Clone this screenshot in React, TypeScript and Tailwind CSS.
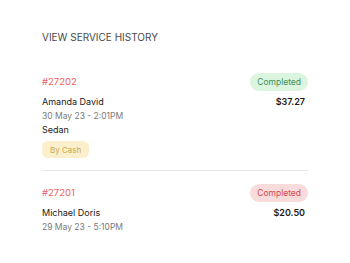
type Status = 'success' | 'failed'

interface Job {
  id: string
  customer: string
  date: string
  amount: string
  status: Status
  vehicle?: string
  payment?: string
}

const jobs: Job[] = [
  {
    id: '#27202',
    customer: 'Amanda David',
    date: '30 May 23 - 2:01PM',
    amount: '$37.27',
    status: 'success',
    vehicle: 'Sedan',
    payment: 'By Cash',
  },
  {
    id: '#27201',
    customer: 'Michael Doris',
    date: '29 May 23 - 5:10PM',
    amount: '$20.50',
    status: 'failed',
  },
]

export default function App() {
  return (
    <div className="min-h-[263px] w-full bg-white px-[42px] pt-[31px] font-['Inter',sans-serif] text-[#1a1a1a]">
      <h1 className="text-[10px] leading-[12px] uppercase text-[#4a4a4a]">
        View service history
      </h1>

      <div className="mt-[30px] flex flex-col">
        {jobs.map((job, i) => (
          <JobRow key={job.id} job={job} last={i === jobs.length - 1} />
        ))}
      </div>
    </div>
  )
}

function JobRow({ job, last }: { job: Job; last: boolean }) {
  return (
    <div className={last ? 'pt-[13px]' : 'border-b border-[#e6e6e6] pb-[12px]'}>
      <div className="flex h-[18px] items-center justify-between">
        <span className="text-[9.5px] text-[#f06060]">{job.id}</span>
        <StatusBadge status={job.status} />
      </div>
      <div className="mt-[3px] flex items-center justify-between text-[9px] leading-[15px]">
        <span>{job.customer}</span>
        <span className="pr-[3px] font-semibold">{job.amount}</span>
      </div>
      <p className="text-[8.5px] leading-[14px] text-[#7a7a7a]">{job.date}</p>
      {job.vehicle && (
        <p className="text-[9px] leading-[14px]">{job.vehicle}</p>
      )}
      {job.payment && (
        <div className="mt-[4px] flex h-[17px] w-fit items-center rounded-[6px] bg-[#fbf0cb] px-[8px] text-[8px] text-[#c7a751]">
          {job.payment}
        </div>
      )}
    </div>
  )
}

function StatusBadge({ status }: { status: Status }) {
  const toneClass =
    status === 'success'
      ? 'bg-[#dcf5df] text-[#3f8e55]'
      : 'bg-[#f8dcdc] text-[#d8464a]'

  return (
    <span
      className={`inline-flex h-[18px] items-center rounded-full px-[7px] text-[8.5px] ${toneClass}`}
    >
      Completed
    </span>
  )
}
